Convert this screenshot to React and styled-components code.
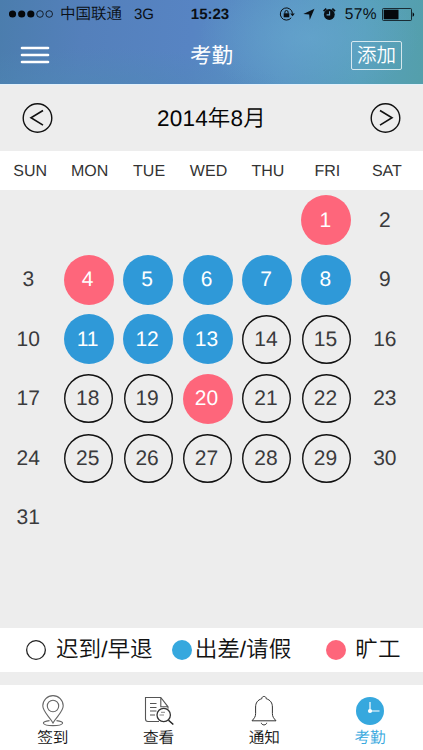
import React from "react"
import styled, { createGlobalStyle } from "styled-components"

const GlobalStyle = createGlobalStyle`
  * {
    box-sizing: border-box;
  }
  body {
    margin: 0;
    background: #ededed;
    font-family: "Liberation Sans", "Noto Sans CJK SC", sans-serif;
    font-weight: 350;
    text-rendering: geometricPrecision;
  }
  svg {
    display: block;
    flex: none;
  }
`

const Screen = styled.div`
  width: 423px;
  height: 750px;
  display: flex;
  flex-direction: column;
  overflow: hidden;
`

const Header = styled.header`
  height: 85px;
  border-bottom: 1px solid #e2f1fc;
  background: radial-gradient(
      ellipse 110px 60px at 73% 45%,
      rgba(104, 168, 208, 0.6),
      transparent
    ),
    radial-gradient(
      ellipse 200px 45px at 22% 110%,
      rgba(78, 138, 180, 0.6),
      transparent
    ),
    linear-gradient(
      97deg,
      #4b7dad 0%,
      #5480bb 20%,
      #5784c3 45%,
      #5a96c4 68%,
      #57a0bb 85%,
      #549fab 100%
    );
`

const StatusBar = styled.div`
  display: flex;
  align-items: center;
  height: 28px;
  padding: 0 8px 0 9px;
  color: #0a0f14;
  font-size: 15px;
  line-height: 28px;
`

const StatusSide = styled.div`
  flex: 1;
  display: flex;
  align-items: center;
  justify-content: ${props => (props.$end ? "flex-end" : "flex-start")};
`

const StatusText = styled.span`
  padding-top: 1px;
`

const Carrier = styled(StatusText)`
  margin: 0 12px 0 6px;
  font-size: 15.5px;
`

const Time = styled(StatusText)`
  margin: 0 2px 0 -2px;
  font-weight: bold;
`

const Percent = styled(StatusText)`
  margin: 0 5px 0 8px;
  font-size: 15.5px;
  letter-spacing: 0.4px;
`

const NavBar = styled.div`
  display: grid;
  grid-template-columns: 1fr auto 1fr;
  align-items: center;
  height: 54px;
  padding: 0 21px;
  color: #fff;
`

const MenuButton = styled.button`
  display: flex;
  flex-direction: column;
  gap: 5px;
  width: 28px;
  padding: 0;
  border: 0;
  background: none;
  span {
    height: 2px;
    border-radius: 1px;
    background: #fff;
    box-shadow: 0 0 0 0.3px #fff;
  }
`

const Title = styled.h1`
  margin: 0;
  padding-top: 2px;
  font-size: 21.5px;
  font-weight: 400;
  line-height: 30px;
`

const AddButton = styled.button`
  justify-self: end;
  width: 51px;
  height: 29px;
  padding: 0;
  border: 1px solid rgba(255, 255, 255, 0.75);
  border-radius: 2px;
  background: none;
  color: #fff;
  font: inherit;
  font-size: 19.5px;
  line-height: 25px;
`

const MonthBar = styled.div`
  display: flex;
  align-items: center;
  justify-content: space-between;
  height: 66px;
  padding: 0 22px;
  color: #050505;
`

const Month = styled.h2`
  margin: 0;
  padding-bottom: 3px;
  font-size: 22.5px;
  font-weight: 350;
  letter-spacing: 0.2px;
`

const Weekdays = styled.div`
  display: grid;
  grid-template-columns: repeat(7, 59.45px);
  align-items: center;
  height: 39px;
  padding: 2px 0 0 0.5px;
  background: #fff;
  color: #333;
  font-size: 16px;
  text-align: center;
`

const Calendar = styled.main`
  display: grid;
  grid-template-columns: repeat(7, 59.45px);
  grid-auto-rows: 59.4px;
  align-content: start;
  flex: 1;
  padding-top: 0.8px;
  margin-left: -0.5px;
`

const fills = {
  absent: "#fe667b",
  trip: "#2f99d8",
}

const Day = styled.div`
  place-self: center;
  display: flex;
  align-items: center;
  justify-content: center;
  width: ${props => (props.$kind === "late" ? 49 : 50)}px;
  height: ${props => (props.$kind === "late" ? 49 : 50)}px;
  padding: 1px 2px 0 0;
  border-radius: 50%;
  background: ${props => fills[props.$kind] || "transparent"};
  box-shadow: ${props =>
    props.$kind === "late" ? "inset 0 0 0 1.4px #111" : "none"};
  color: ${props => (fills[props.$kind] ? "#fff" : "#3a3a3c")};
  font-size: 21px;
`

const FirstDay = styled(Day)`
  grid-column-start: 6;
`

const Legend = styled.div`
  display: flex;
  align-items: center;
  height: 44px;
  padding-left: 26px;
  margin-bottom: 13px;
  background: #fff;
  color: #111;
  font-size: 22.6px;
  line-height: 30px;
`

const LegendItem = styled.div`
  display: flex;
  align-items: center;
  gap: ${props => props.$gap}px;
  margin-right: ${props => props.$after || 0}px;
`

const Dot = styled.span`
  width: 20px;
  height: 20px;
  border-radius: 50%;
  background: ${props => props.$color || "transparent"};
  box-shadow: ${props => (props.$color ? "none" : "inset 0 0 0 1.3px #222")};
`

const TabBar = styled.nav`
  display: grid;
  grid-template-columns: repeat(4, 105.75px);
  height: 65px;
  background: #fff;
`

const Tab = styled.a`
  display: flex;
  flex-direction: column;
  align-items: center;
  padding-top: 10px;
  color: ${props => (props.$active ? "#36a8de" : "#111")};
  font-size: 15.7px;
  line-height: 22px;
  svg {
    margin-bottom: 1px;
  }
`

const Signal = () => (
  <svg width="45" height="10" viewBox="0 0 45 10">
    {[3.5, 12.7, 21.8, 31, 40.2].map((x, i) => (
      <circle
        key={x}
        cx={x}
        cy="5"
        r={i < 3 ? 3.6 : 3.3}
        fill={i < 3 ? "#05080c" : "none"}
        stroke="#05080c"
        strokeWidth={i < 3 ? 0 : 0.8}
      />
    ))}
  </svg>
)

const StatusIcons = () => (
  <svg width="58" height="16" viewBox="0 0 58 16">
    {/* rotation lock */}
    <path
      d="M12.2 11.8A6.1 6.1 0 1 1 13.5 7.5"
      fill="none"
      stroke="#0a0f14"
      strokeWidth="1"
    />
    <path d="M11.2 7.4h4.6l-2.3 2.8z" fill="#0a0f14" />
    <path d="M4.7 7.3h5.6v4H4.7z" fill="#0a0f14" />
    <path
      d="M5.9 7.5V6.100a1.600 1.600 0 0 1 3.200 0v1.400"
      fill="none"
      stroke="#0a0f14"
      strokeWidth="1"
    />
    {/* location arrow */}
    <path d="M35.5 2.7 30.7 14 30.2 8.4 24.3 8z" fill="#0a0f14" />
    {/* alarm clock */}
    <circle cx="50.3" cy="8.5" r="5.4" fill="#0a0f14" />
    <path
      d="M44.6 5.1 47.3 2.7M53.3 2.700 56 5.100"
      stroke="#0a0f14"
      strokeWidth="1.8"
    />
    <path
      d="M50.6 5.200v3.700h-3"
      fill="none"
      stroke="#68a6cc"
      strokeWidth="1.1"
    />
  </svg>
)

const Battery = () => (
  <svg width="33" height="13" viewBox="0 0 33 13">
    <rect
      x="0.5"
      y="0.5"
      width="29"
      height="12"
      rx="1"
      fill="none"
      stroke="#0a0f14"
      strokeWidth="0.8"
    />
    <path d="M1.7 1.7h14.8v9.6H1.7z" fill="#05080c" />
    <path d="M30.6 4.2a2.5 2.5 0 0 1 0 4.6z" fill="#05080c" />
  </svg>
)

const Arrow = ({ next }) => (
  <svg width="31" height="31" viewBox="0 0 31 31" fill="none" stroke="#111">
    <circle cx="15.5" cy="15" r="14.3" strokeWidth="1.4" />
    <path
      d={next ? "M10 7.5 22 14.800 10 22.100" : "M21 7.500 9 14.800 21 22.100"}
      strokeWidth="1.6"
    />
  </svg>
)

const PinIcon = () => (
  <svg width="30" height="32" viewBox="0 0 30 32" fill="none" stroke="#666">
    <path
      d="M15 28C11.500 21.500 4.800 16.800 4.800 10.800a10.200 10.200 0 0 1 20.400 0c0 6-6.700 10.700-10.200 17.200z"
      strokeWidth="1.1"
    />
    <circle cx="15" cy="11" r="5.7" strokeWidth="1.1" />
    <path
      d="M11.500 25.600C2.500 26.300 3.200 30.600 15 30.600S27.500 26.300 18.500 25.600"
      strokeWidth="1.1"
    />
  </svg>
)

const SearchDocIcon = () => (
  <svg width="30" height="32" viewBox="0 0 30 32" fill="none" stroke="#555">
    <path
      d="M15 26.500H4c-1.600 0-2.500-.9-2.500-2.500V2.500h15.300l7.200 9.300v2M16.800 2.500v9.300H24"
      strokeWidth="1.1"
    />
    <path d="M6 8.500h6.500M6 12.500h6.500M6 16h6.500M6 20h5" strokeWidth="1.2" />
    <circle cx="19.7" cy="20" r="6.7" stroke="#333" strokeWidth="1.3" />
    <path d="M15.500 20h4.500M17 17.300h4" stroke="#888" strokeWidth="1" />
    <path d="M24.500 25.200 29.300 29.500" stroke="#222" strokeWidth="1.5" />
  </svg>
)

const BellIcon = () => (
  <svg width="30" height="32" viewBox="0 0 30 32" fill="none" stroke="#333">
    <path
      d="M12.800 3.700C12.600.7 17.400.7 17.200 3.700 21.500 5 23.400 8 23.400 12v6.500c0 3.300 1.200 4.500 3.600 7.300H3c2.400-2.800 3.600-4 3.600-7.300V12c0-4 1.900-7 6.200-8.300z"
      strokeWidth="1"
    />
    <path d="M12.300 27.800c.3 2.800 5.100 2.800 5.400 0" strokeWidth="1" />
  </svg>
)

const ClockIcon = () => (
  <svg width="30" height="32" viewBox="0 0 30 32">
    <circle cx="15" cy="16" r="14" fill="#36a8de" />
    <path d="M15 7v9h9.500" fill="none" stroke="#fff" strokeWidth="1.2" />
    <circle cx="15" cy="16" r="2.1" fill="#fff" />
  </svg>
)

const weekdays = ["SUN", "MON", "TUE", "WED", "THU", "FRI", "SAT"]
const absent = [4, 20]
const trip = [5, 6, 7, 8, 11, 12, 13]
const late = [14, 15, 18, 19, 21, 22, 25, 26, 27, 28, 29]

const kindOf = day => {
  if (absent.includes(day)) return "absent"
  if (trip.includes(day)) return "trip"
  if (late.includes(day)) return "late"
  return "none"
}

const App = () => (
  <>
    <GlobalStyle />
    <Screen>
      <Header>
        <StatusBar>
          <StatusSide>
            <Signal />
            <Carrier>中国联通</Carrier>
            <StatusText>3G</StatusText>
          </StatusSide>
          <Time>15:23</Time>
          <StatusSide $end>
            <StatusIcons />
            <Percent>57%</Percent>
            <Battery />
          </StatusSide>
        </StatusBar>
        <NavBar>
          <MenuButton aria-label="菜单">
            <span />
            <span />
            <span />
          </MenuButton>
          <Title>考勤</Title>
          <AddButton>添加</AddButton>
        </NavBar>
      </Header>
      <MonthBar>
        <Arrow />
        <Month>2014年8月</Month>
        <Arrow next />
      </MonthBar>
      <Weekdays>
        {weekdays.map(name => (
          <span key={name}>{name}</span>
        ))}
      </Weekdays>
      <Calendar>
        <FirstDay $kind="absent">1</FirstDay>
        {Array.from({ length: 30 }, (_, i) => i + 2).map(day => (
          <Day key={day} $kind={kindOf(day)}>
            {day}
          </Day>
        ))}
      </Calendar>
      <Legend>
        <LegendItem $gap={10} $after={19}>
          <Dot />
          <span>迟到/早退</span>
        </LegendItem>
        <LegendItem $gap={3} $after={35}>
          <Dot $color="#36a8de" />
          <span>出差/请假</span>
        </LegendItem>
        <LegendItem $gap={9}>
          <Dot $color="#fe667b" />
          <span>旷工</span>
        </LegendItem>
      </Legend>
      <TabBar>
        <Tab>
          <PinIcon />
          签到
        </Tab>
        <Tab>
          <SearchDocIcon />
          查看
        </Tab>
        <Tab>
          <BellIcon />
          通知
        </Tab>
        <Tab $active>
          <ClockIcon />
          考勤
        </Tab>
      </TabBar>
    </Screen>
  </>
)

export default App
